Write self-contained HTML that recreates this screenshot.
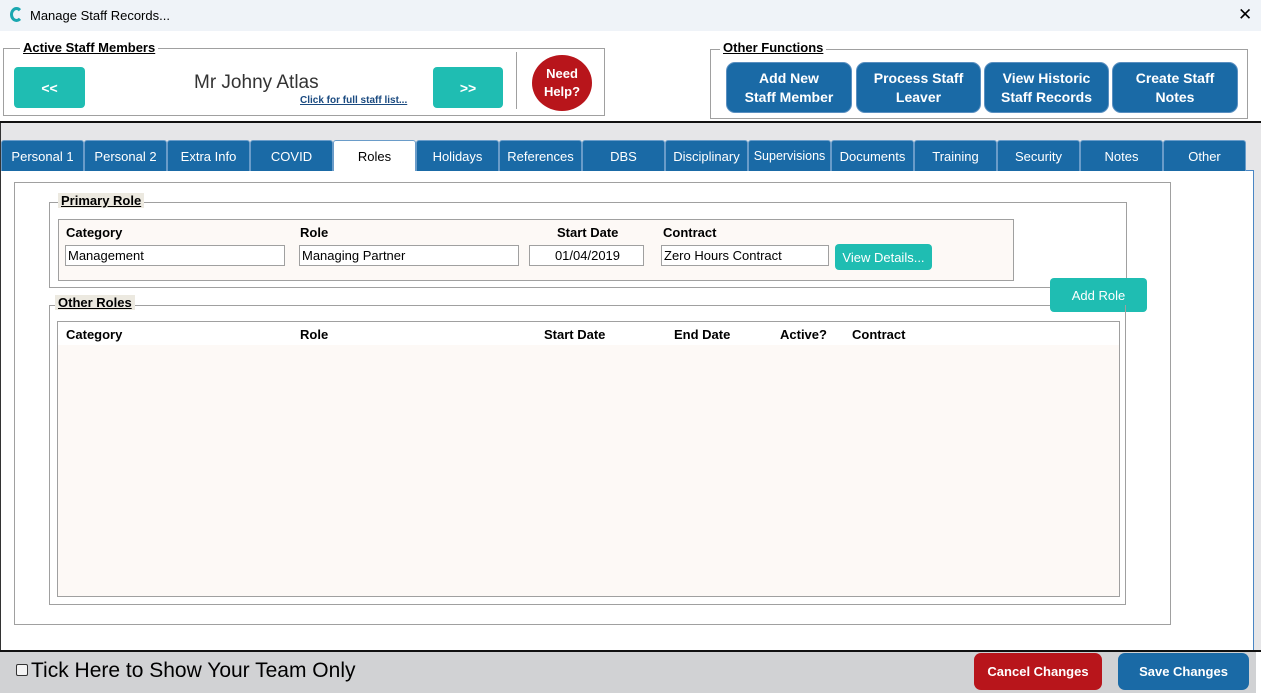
<!DOCTYPE html>
<html><head><meta charset="utf-8"><style>
*{margin:0;padding:0;box-sizing:border-box}
body{width:1261px;height:693px;position:relative;overflow:hidden;background:#fff;font-family:"Liberation Sans",sans-serif;color:#000}
.a{position:absolute}
.fs{position:absolute;border:1px solid #a0a0a0}
.lg{position:absolute;background:#fff;font-weight:bold;text-decoration:underline;font-size:13px;padding:0 3px}
.btn{position:absolute;color:#fff;font-weight:bold;text-align:center;display:flex;align-items:center;justify-content:center}
.tab{position:absolute;top:140px;width:83px;height:31px;background:#1a6aa6;color:#fff;font-size:13px;text-align:center;line-height:31px;border:1px solid #6a9cc9;border-bottom:none;border-radius:3px 3px 0 0}
.inp{position:absolute;height:21px;border:1px solid #a0a0a0;background:#fff;font-size:13px;line-height:19px;padding-left:2px}
.hd{position:absolute;font-weight:bold;font-size:13px}
</style></head><body>
<div class="a" style="left:0;top:0;width:1261px;height:31px;background:#eff3f8"></div>
<div class="a" style="left:10px;top:7px;width:13px;height:15px;border:3px solid #1aa7b0;border-right-color:transparent;border-radius:50%"></div>
<div class="a" style="left:30px;top:8px;font-size:13px">Manage Staff Records...</div>
<div class="a" style="left:1238px;top:5px;font-size:17px">✕</div>

<div class="fs" style="left:3px;top:48px;width:602px;height:68px"></div>
<div class="lg" style="left:20px;top:40px">Active Staff Members</div>
<div class="btn" style="left:14px;top:67px;width:71px;height:41px;background:#1fbdb2;border-radius:4px;font-size:14px">&lt;&lt;</div>
<div class="a" style="left:194px;top:72px;font-size:19px;color:#333">Mr Johny Atlas</div>
<div class="a" style="left:300px;top:95px;font-size:10px;font-weight:bold;text-decoration:underline;color:#1a4a80">Click for full staff list...</div>
<div class="btn" style="left:433px;top:67px;width:70px;height:41px;background:#1fbdb2;border-radius:4px;font-size:14px">&gt;&gt;</div>
<div class="a" style="left:516px;top:52px;width:1px;height:57px;background:#a0a0a0"></div>
<div class="btn" style="left:532px;top:55px;width:60px;height:56px;background:#b8151b;border-radius:50%;font-size:13px;line-height:18px">Need<br>Help?</div>

<div class="fs" style="left:710px;top:49px;width:538px;height:70px"></div>
<div class="lg" style="left:720px;top:40px">Other Functions</div>
<div class="btn" style="left:726px;top:62px;width:126px;height:51px;background:#1a6aa6;border-radius:9px;border:1px solid #5a8fc0;font-size:14px;line-height:19px">Add New<br>Staff Member</div>
<div class="btn" style="left:856px;top:62px;width:125px;height:51px;background:#1a6aa6;border-radius:9px;border:1px solid #5a8fc0;font-size:14px;line-height:19px">Process Staff<br>Leaver</div>
<div class="btn" style="left:984px;top:62px;width:125px;height:51px;background:#1a6aa6;border-radius:9px;border:1px solid #5a8fc0;font-size:14px;line-height:19px">View Historic<br>Staff Records</div>
<div class="btn" style="left:1112px;top:62px;width:126px;height:51px;background:#1a6aa6;border-radius:9px;border:1px solid #5a8fc0;font-size:14px;line-height:19px">Create Staff<br>Notes</div>

<div class="a" style="left:0;top:121px;width:1261px;height:2px;background:#111"></div>
<div class="a" style="left:0;top:123px;width:1261px;height:528px;background:#e6e6e8"></div>
<div class="a" style="left:1px;top:170px;width:1253px;height:481px;background:#fff;border:1px solid #4a86c4;border-left:none;border-top:none"></div>
<div class="a" style="left:0;top:123px;width:1px;height:528px;background:#333"></div>

<div class="tab" style="left:1px">Personal 1</div>
<div class="tab" style="left:84px">Personal 2</div>
<div class="tab" style="left:167px">Extra Info</div>
<div class="tab" style="left:250px">COVID</div>
<div class="tab" style="left:333px;background:#fff;color:#000">Roles</div>
<div class="tab" style="left:416px">Holidays</div>
<div class="tab" style="left:499px">References</div>
<div class="tab" style="left:582px">DBS</div>
<div class="tab" style="left:665px">Disciplinary</div>
<div class="tab" style="left:748px;font-size:12.5px">Supervisions</div>
<div class="tab" style="left:831px">Documents</div>
<div class="tab" style="left:914px">Training</div>
<div class="tab" style="left:997px">Security</div>
<div class="tab" style="left:1080px">Notes</div>
<div class="tab" style="left:1163px">Other</div>
<div class="a" style="left:1246px;top:170px;width:8px;height:1px;background:#4a86c4"></div>

<div class="fs" style="left:14px;top:182px;width:1157px;height:443px"></div>
<div class="fs" style="left:49px;top:202px;width:1078px;height:85px;border-bottom:none"></div>
<div class="a" style="left:49px;top:287px;width:1002px;height:1px;background:#a0a0a0"></div>
<div class="lg" style="left:58px;top:193px;background:#ece9e0">Primary Role</div>
<div class="a" style="left:58px;top:219px;width:956px;height:62px;background:#fdf9f6;border:1px solid #a0a0a0"></div>
<div class="hd" style="left:66px;top:225px">Category</div>
<div class="hd" style="left:300px;top:225px">Role</div>
<div class="hd" style="left:557px;top:225px">Start Date</div>
<div class="hd" style="left:663px;top:225px">Contract</div>
<div class="inp" style="left:65px;top:245px;width:220px">Management</div>
<div class="inp" style="left:299px;top:245px;width:220px">Managing Partner</div>
<div class="inp" style="left:529px;top:245px;width:115px;text-align:center">01/04/2019</div>
<div class="inp" style="left:661px;top:245px;width:168px">Zero Hours Contract</div>
<div class="btn" style="left:835px;top:244px;width:97px;height:26px;background:#1fbdb2;border-radius:4px;font-weight:normal;font-size:13px">View Details...</div>
<div class="btn" style="left:1050px;top:278px;width:97px;height:34px;background:#1fbdb2;border-radius:4px;font-weight:normal;font-size:13px">Add Role</div>

<div class="fs" style="left:49px;top:305px;width:1077px;height:300px;border-top:none"></div>
<div class="a" style="left:49px;top:305px;width:1001px;height:1px;background:#a0a0a0"></div>
<div class="lg" style="left:55px;top:295px;background:#ece9e0">Other Roles</div>
<div class="a" style="left:57px;top:321px;width:1063px;height:276px;background:#fdf9f6;border:1px solid #a0a0a0"></div>
<div class="a" style="left:58px;top:322px;width:1061px;height:23px;background:#fff"></div>
<div class="hd" style="left:66px;top:327px">Category</div>
<div class="hd" style="left:300px;top:327px">Role</div>
<div class="hd" style="left:544px;top:327px">Start Date</div>
<div class="hd" style="left:674px;top:327px">End Date</div>
<div class="hd" style="left:780px;top:327px">Active?</div>
<div class="hd" style="left:852px;top:327px">Contract</div>

<div class="a" style="left:0;top:650px;width:1261px;height:2px;background:#111"></div>
<div class="a" style="left:0;top:652px;width:1256px;height:41px;background:#d1d2d4"></div>
<div class="a" style="left:16px;top:664px;width:12px;height:12px;border:1px solid #333;border-radius:2px;background:#f4f4f4"></div>
<div class="a" style="left:31px;top:659px;font-size:21px">Tick Here to Show Your Team Only</div>
<div class="btn" style="left:974px;top:653px;width:128px;height:37px;background:#b8151b;border-radius:7px;font-size:13px">Cancel Changes</div>
<div class="btn" style="left:1118px;top:653px;width:131px;height:37px;background:#1a6aa6;border-radius:7px;font-size:13px">Save Changes</div>
</body></html>
